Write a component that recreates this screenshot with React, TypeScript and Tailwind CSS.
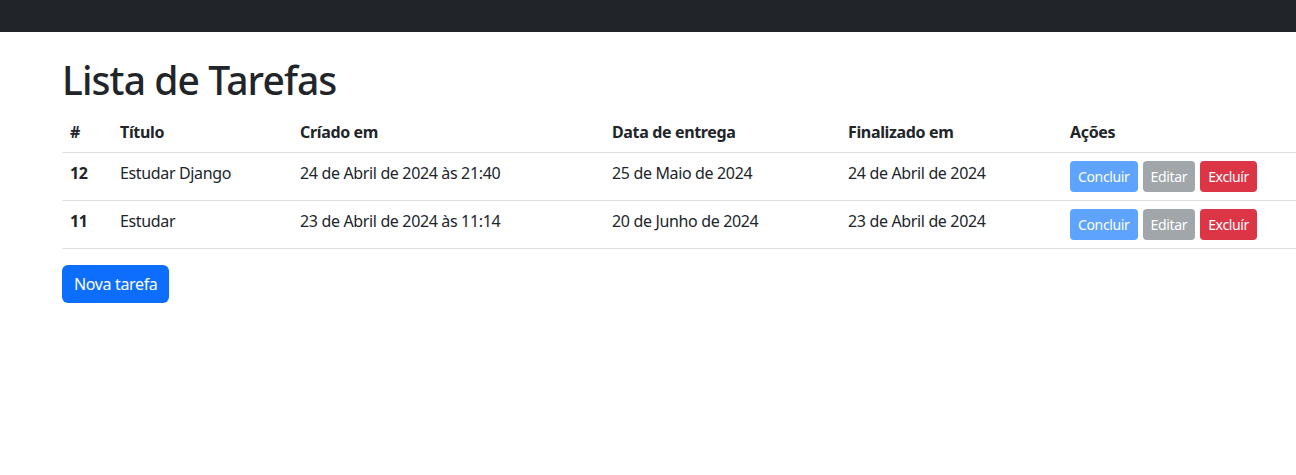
export default function App() {
  const tarefas = [
    { id: 12, titulo: 'Estudar Django', criado: '24 de Abril de 2024 às 21:40', entrega: '25 de Maio de 2024', finalizado: '24 de Abril de 2024' },
    { id: 11, titulo: 'Estudar', criado: '23 de Abril de 2024 às 11:14', entrega: '20 de Junho de 2024', finalizado: '23 de Abril de 2024' },
  ];

  return (
    <div className="min-h-screen bg-white text-[#212529] tracking-[-0.35px]" style={{ fontFamily: '"Noto Sans", "Open Sans", sans-serif' }}>
      <nav className="h-8 bg-[#212529]" />
      <div className="pl-[62px] pt-6">
        <h1 className="text-[39px] leading-[48px] font-medium tracking-[-0.9px] mb-2">Lista de Tarefas</h1>
        <table className="w-[1234px] table-fixed border-collapse text-base">
          <colgroup>
            <col className="w-[50px]" />
            <col className="w-[180px]" />
            <col className="w-[312px]" />
            <col className="w-[236px]" />
            <col className="w-[222px]" />
            <col />
          </colgroup>
          <thead>
            <tr className="border-b border-[#dee2e6]">
              <th className="p-2 text-left font-bold align-top">#</th>
              <th className="p-2 text-left font-bold align-top">Título</th>
              <th className="p-2 text-left font-bold align-top">Críado em</th>
              <th className="p-2 text-left font-bold align-top">Data de entrega</th>
              <th className="p-2 text-left font-bold align-top">Finalizado em</th>
              <th className="p-2 text-left font-bold align-top">Ações</th>
            </tr>
          </thead>
          <tbody>
            {tarefas.map((t) => (
              <tr key={t.id} className="border-b border-[#dee2e6]">
                <td className="p-2 font-bold align-top">{t.id}</td>
                <td className="p-2 align-top">{t.titulo}</td>
                <td className="p-2 align-top">{t.criado}</td>
                <td className="p-2 align-top">{t.entrega}</td>
                <td className="p-2 align-top">{t.finalizado}</td>
                <td className="p-2 align-top">
                  <div className="flex gap-[5px]">
                    <button className="h-[31px] px-2 rounded bg-[#5ea3fe] text-white text-sm">Concluir</button>
                    <button className="h-[31px] px-2 rounded bg-[#a1a6ab] text-white text-sm">Editar</button>
                    <button className="h-[31px] px-2 rounded bg-[#dc3545] text-white text-sm">Excluír</button>
                  </div>
                </td>
              </tr>
            ))}
          </tbody>
        </table>
        <button className="mt-4 h-[38px] px-3 rounded-md bg-[#0d6efd] text-white text-base">Nova tarefa</button>
      </div>
    </div>
  );
}
